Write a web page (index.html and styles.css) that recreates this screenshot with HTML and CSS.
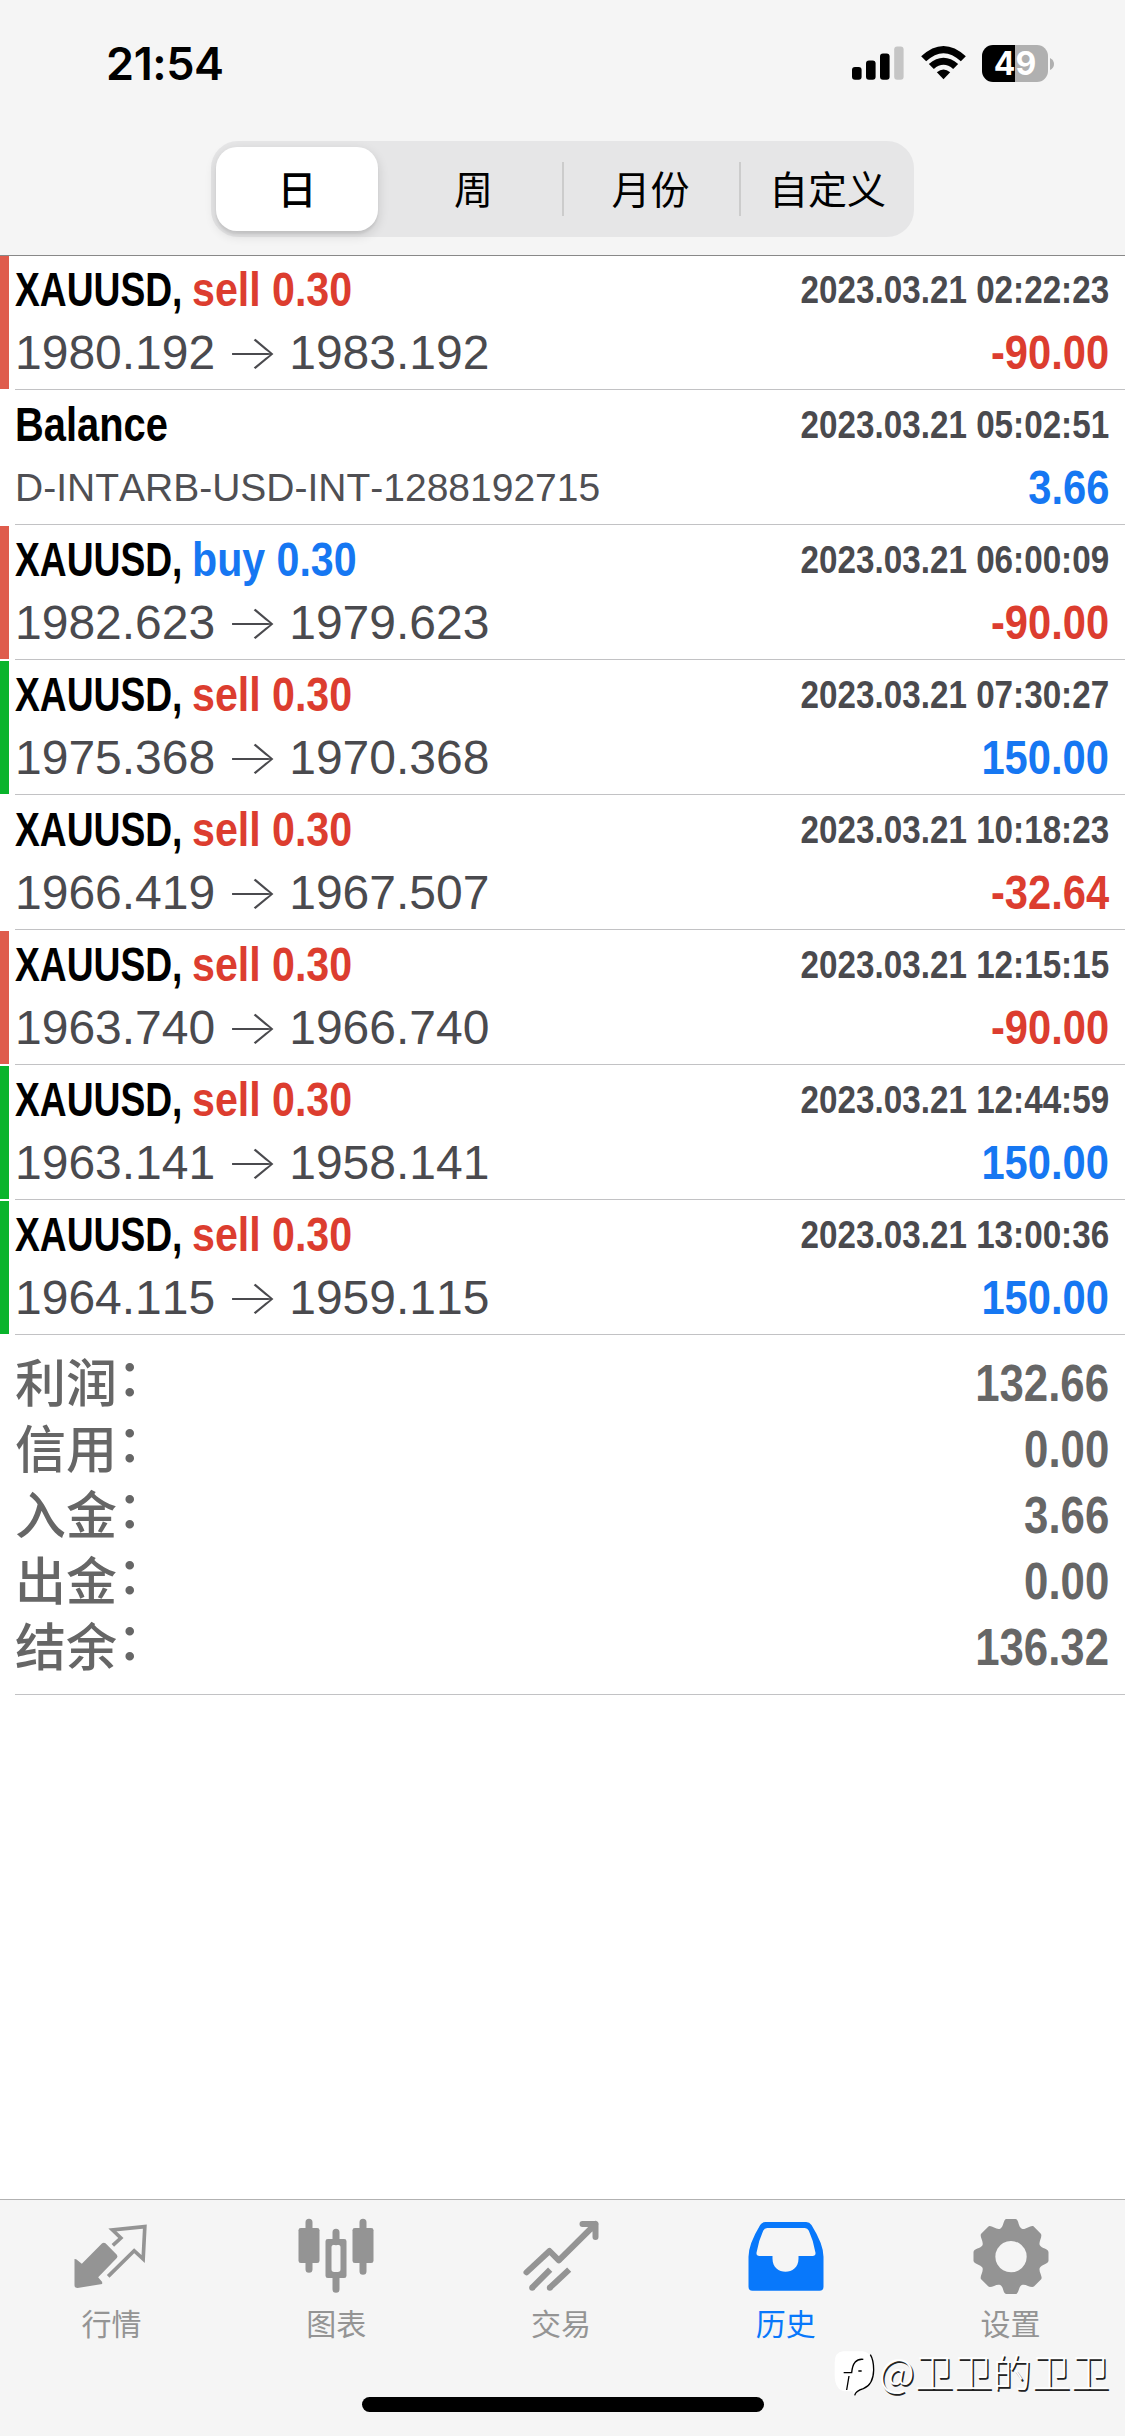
FILE: index.html
```html
<!DOCTYPE html>
<html lang="zh-CN">
<head>
<meta charset="utf-8">
<title>历史</title>
<link rel="stylesheet" href="styles.css">
</head>
<body>
<div class="app">
  <header class="header">
    <div class="status">
      <span class="time">21:54</span>
      <div class="status-icons">
        <svg class="signal" width="52" height="34" viewBox="0 0 52 34">
          <rect x="0" y="21" width="9.6" height="12.7" rx="3"/>
          <rect x="14" y="14.5" width="9.6" height="19.2" rx="3"/>
          <rect x="28" y="7.5" width="9.6" height="26.2" rx="3"/>
          <rect x="42.2" y="0.5" width="9.4" height="33.2" rx="3" fill="#c5c5c5"/>
        </svg>
        <svg class="wifi" width="45" height="34" viewBox="0 0 134 102">
          <path d="M0 31Q67-31 134 31L119 46Q67-3 15 46Z"/>
          <path d="M23 54Q67 16 111 54L96 69Q67 44 38 69Z"/>
          <path d="M47 79Q67 62 87 79L67 100Z"/>
        </svg>
        <div class="battery"><span class="level">49</span><svg width="4" height="12" viewBox="0 0 4 12"><path d="M0 0Q4 2 4 6T0 12Z" fill="#b0b0b0"/></svg></div>
      </div>
    </div>
    <nav class="segments">
      <span class="segment active">日</span>
      <span class="segment">周</span>
      <span class="segment divided">月份</span>
      <span class="segment divided">自定义</span>
    </nav>
  </header>

  <main class="history">
    <section class="deals">
      <article class="deal loss"><div class="body">
        <div class="line"><h2><span class="symbol">XAUUSD,</span><span class="side sell">sell 0.30</span></h2><time>2023.03.21 02:22:23</time></div>
        <div class="line"><p class="prices">1980.192<i class="arrow">→</i>1983.192</p><b class="amount neg">-90.00</b></div>
      </div></article>
      <article class="deal"><div class="body">
        <div class="line"><h2><span class="symbol balance">Balance</span></h2><time>2023.03.21 05:02:51</time></div>
        <div class="line"><p class="comment">D-INTARB-USD-INT-1288192715</p><b class="amount pos">3.66</b></div>
      </div></article>
      <article class="deal loss"><div class="body">
        <div class="line"><h2><span class="symbol">XAUUSD,</span><span class="side buy">buy 0.30</span></h2><time>2023.03.21 06:00:09</time></div>
        <div class="line"><p class="prices">1982.623<i class="arrow">→</i>1979.623</p><b class="amount neg">-90.00</b></div>
      </div></article>
      <article class="deal gain"><div class="body">
        <div class="line"><h2><span class="symbol">XAUUSD,</span><span class="side sell">sell 0.30</span></h2><time>2023.03.21 07:30:27</time></div>
        <div class="line"><p class="prices">1975.368<i class="arrow">→</i>1970.368</p><b class="amount pos">150.00</b></div>
      </div></article>
      <article class="deal"><div class="body">
        <div class="line"><h2><span class="symbol">XAUUSD,</span><span class="side sell">sell 0.30</span></h2><time>2023.03.21 10:18:23</time></div>
        <div class="line"><p class="prices">1966.419<i class="arrow">→</i>1967.507</p><b class="amount neg">-32.64</b></div>
      </div></article>
      <article class="deal loss"><div class="body">
        <div class="line"><h2><span class="symbol">XAUUSD,</span><span class="side sell">sell 0.30</span></h2><time>2023.03.21 12:15:15</time></div>
        <div class="line"><p class="prices">1963.740<i class="arrow">→</i>1966.740</p><b class="amount neg">-90.00</b></div>
      </div></article>
      <article class="deal gain"><div class="body">
        <div class="line"><h2><span class="symbol">XAUUSD,</span><span class="side sell">sell 0.30</span></h2><time>2023.03.21 12:44:59</time></div>
        <div class="line"><p class="prices">1963.141<i class="arrow">→</i>1958.141</p><b class="amount pos">150.00</b></div>
      </div></article>
      <article class="deal gain"><div class="body">
        <div class="line"><h2><span class="symbol">XAUUSD,</span><span class="side sell">sell 0.30</span></h2><time>2023.03.21 13:00:36</time></div>
        <div class="line"><p class="prices">1964.115<i class="arrow">→</i>1959.115</p><b class="amount pos">150.00</b></div>
      </div></article>
    </section>
    <dl class="summary">
      <div class="total"><dt>利润<span class="colon">：</span></dt><dd>132.66</dd></div>
      <div class="total"><dt>信用<span class="colon">：</span></dt><dd>0.00</dd></div>
      <div class="total"><dt>入金<span class="colon">：</span></dt><dd>3.66</dd></div>
      <div class="total"><dt>出金<span class="colon">：</span></dt><dd>0.00</dd></div>
      <div class="total"><dt>结余<span class="colon">：</span></dt><dd>136.32</dd></div>
    </dl>
  </main>

  <footer class="tabbar">
    <nav class="tabs">
      <a class="tab">
        <svg viewBox="52.5 42 270 240"><path d="M75 177L80 178L97 191L158 130Q163 126 168 130L202 164Q206 169 202 174L146 232L158 246V252L84 264Q75 264 75 256Z"/><path d="M190 136L214 114L189 90L286 80L281 177L254 152L176 229" fill="none" stroke="currentColor" stroke-width="11"/></svg>
        <span>行情</span>
      </a>
      <a class="tab">
        <svg viewBox="727.5 42 270 240"><rect x="747" y="84" width="63" height="105" rx="7"/><rect x="909" y="84" width="63" height="105" rx="7"/><path d="M778.500 67V208M940.500 67V214M859.500 97V125M859.500 228V268" fill="none" stroke="currentColor" stroke-width="21" stroke-linecap="round"/><path fill-rule="evenodd" d="M835 117H884Q891 117 891 124V227Q891 234 884 234H835Q828 234 828 227V124Q828 117 835 117ZM854 134Q846 134 846 142V208Q846 216 854 216H865Q873 216 873 208V142Q873 134 865 134Z"/></svg>
        <span>图表</span>
      </a>
      <a class="tab">
        <svg viewBox="52.5 42 270 240" ><g fill="none" stroke="currentColor" stroke-width="18" stroke-linejoin="round"><path d="M81 217L150 153L178 181L288 72M249 72H288V111" stroke-linecap="round"/><path d="M152 209L98 263M209 209L151 263"/></g><circle cx="98" cy="263" r="9"/><circle cx="151" cy="263" r="9"/></svg>
        <span>交易</span>
      </a>
      <a class="tab current">
        <svg viewBox="37.500 42 270 240"><path fill-rule="evenodd" d="M108 66H230Q240 66 246 75Q282 133 282 170V260Q282 272 270 272H69Q57 272 57 260V170Q57 133 92 75Q98 66 108 66ZM113 84Q105 84 101 92Q87 122 81 158Q80 168 90 168H129V176C129 228 207 228 207 176V168H249Q259 168 258 158Q252 122 238 92Q234 84 226 84Z"/></svg>
        <span>历史</span>
      </a>
      <a class="tab">
        <svg viewBox="712.5 42 270 240"><path fill-rule="evenodd" d="M831 57H858C868 57 866 82 877 86C888 91 904 73 912 79L934 101C940 109 926 126 931 136C936 146 957 146 957 157V182C957 192 936 193 931 203C926 214 941 230 935 238L914 259C905 266 888 250 877 255C866 260 869 282 858 282H831C820 282 823 260 812 255C801 250 784 266 776 259L755 238C749 230 763 214 759 203C754 193 732 192 732 182V157C732 146 754 146 759 136C763 125 749 109 755 101L776 80C784 73 801 91 812 86C823 82 821 57 831 57ZM844.500 123A47 47 0 1 0 844.600 123Z"/></svg>
        <span>设置</span>
      </a>
    </nav>
    <div class="home-indicator"></div>
    <div class="watermark">
      <svg width="44" height="50" viewBox="40 36 132 150"><path d="M70 40H130Q163 45 163 100Q163 145 122 156L104 173Q100 165 100 160H75Q45 155 45 110V75Q45 42 70 40Z" fill="#fff"/><path d="M152 50Q162 66 162 96Q161 140 131 152Q108 159 105 172M131 64Q100 60 96 104H72M88 114L81 156M116 99H126" fill="none" stroke="#000" stroke-width="4"/></svg>
      <span>@卫卫的卫卫</span>
    </div>
  </footer>
</div>
</body>
</html>
```
FILE: styles.css
```css
* { box-sizing: border-box; }

body {
  margin: 0;
  background: #fff;
  color: #000;
  font-family: "Liberation Sans", "Noto Sans CJK SC", sans-serif;
  font-kerning: none;
}

h2, p, dl, dt, dd { margin: 0; font-weight: inherit; }

.app {
  display: flex;
  flex-direction: column;
  width: 1125px;
  height: 2436px;
  overflow: hidden;
}

/* Header */

.header {
  display: flex;
  flex-direction: column;
  align-items: center;
  height: 256px;
  background: #f5f5f5;
  border-bottom: 1px solid #888;
}

.status {
  display: flex;
  justify-content: space-between;
  width: 100%;
  height: 141px;
  padding: 34px 71px 0 106px;
}

.time {
  font: 600 45px/60px Inter, sans-serif;
  letter-spacing: -0.4px;
}

.status-icons { display: flex; align-items: flex-start; padding-top: 11px; }
.signal { margin-top: 1px; }
.wifi { margin: 1px 16px 0 17px; }

.battery { display: flex; align-items: center; gap: 2px; }

.battery svg { display: block; }

.level {
  width: 66px;
  height: 37px;
  border-radius: 11px;
  background: linear-gradient(90deg, #000 49.5%, #b0b0b0 49.5%);
  color: #fff;
  font: 700 32px/38px Inter, sans-serif;
  text-align: center;
}

.segments {
  display: flex;
  width: 703px;
  height: 96px;
  padding: 6px 0 6px 5px;
  border-radius: 27px;
  background: #e6e6e7;
  font: 400 39px/80px "Noto Sans CJK SC", sans-serif;
  text-align: center;
}

.segment { flex: 0 0 177px; }

.segments .active {
  flex-basis: 162px;
  margin-right: 7px;
  border-radius: 21px;
  background: #fff;
  box-shadow: 0 4px 12px rgba(0, 0, 0, .14), 0 3px 2px rgba(0, 0, 0, .06);
  font-weight: 500;
}

.divided {
  background: linear-gradient(#ccc, #ccc) 0 50% / 2px 54px no-repeat;
}

/* Deals */

.history { flex: 1; }

.deals { margin-top: -1px; }

.deal { display: flex; height: 135px; }

.deal::before {
  content: "";
  width: 9px;
  margin: 1px 6px 1px 0;
}

.loss::before { background: #df5c4d; }
.gain::before { background: #0ab42c; }

.body {
  flex: 1;
  display: flex;
  flex-direction: column;
  gap: 3px;
  padding: 5px 16px 0 0;
  border-bottom: 1px solid #c2c2c4;
}

.line {
  display: flex;
  justify-content: space-between;
  height: 60px;
  line-height: 60px;
  white-space: nowrap;
}

h2 { display: flex; font-size: 48px; font-weight: bold; }

.symbol {
  width: 177px;
  transform: scaleX(.775);
  transform-origin: 0 50%;
}

.balance { transform: scaleX(.83); }

.side { transform: scaleX(.857); transform-origin: 0 50%; }

.sell, .neg { color: #dc3d2f; }
.buy, .pos { color: #1677f2; }

time {
  color: #4a4a4e;
  font-size: 39px;
  font-weight: bold;
  transform: scaleX(.852);
  transform-origin: 100% 50%;
}

.prices { color: #4a4a4e; font-size: 48px; }

.arrow {
  display: inline-block;
  width: 74px;
  font: 200 48px/48px Inter, sans-serif;
  text-align: center;
  transform: scaleX(1.18);
}

.comment { color: #4f4f53; font-size: 39px; }

.amount {
  font-size: 48px;
  transform: scaleX(.868);
  transform-origin: 100% 50%;
}

/* Totals */

.summary {
  height: 360px;
  margin-left: 15px;
  padding: 16px 16px 0 0;
  border-bottom: 1px solid #c2c2c4;
  color: #666;
  font-size: 51px;
  line-height: 66px;
}

.total { display: flex; justify-content: space-between; height: 66px; }

dt {
  font-family: "Noto Sans CJK SC", sans-serif;
  font-weight: 500;
  line-height: 58px;
}

.colon { line-height: 0; vertical-align: 6px; }

dd {
  font-weight: bold;
  transform: scaleX(.858);
  transform-origin: 100% 50%;
}

/* Tab bar */

.tabbar {
  position: relative;
  display: flex;
  flex-direction: column;
  align-items: center;
  height: 237px;
  border-top: 1px solid #b2b2b2;
  background: #f5f5f5;
}

.tabs { display: flex; width: 100%; height: 197px; padding: 14px 1px 0 0; }

.tab {
  flex: 1;
  display: flex;
  flex-direction: column;
  align-items: center;
  color: #949494;
  font: 400 30px/40px "Noto Sans CJK SC", sans-serif;
}

.tab svg { width: 90px; height: 80px; fill: currentColor; }
.tab span { margin: 8px 2px 0 0; }
.current { color: #0878fb; }

.home-indicator { width: 402px; height: 15px; border-radius: 8px; background: #000; }

.watermark {
  position: absolute;
  left: 833px;
  top: 150px;
  display: flex;
  color: #fff;
  font: 300 39px/40px "Noto Sans CJK SC", sans-serif;
  text-shadow: 1.5px 1.5px 0 #222;
}

.watermark span { margin-left: 2px; }
```
